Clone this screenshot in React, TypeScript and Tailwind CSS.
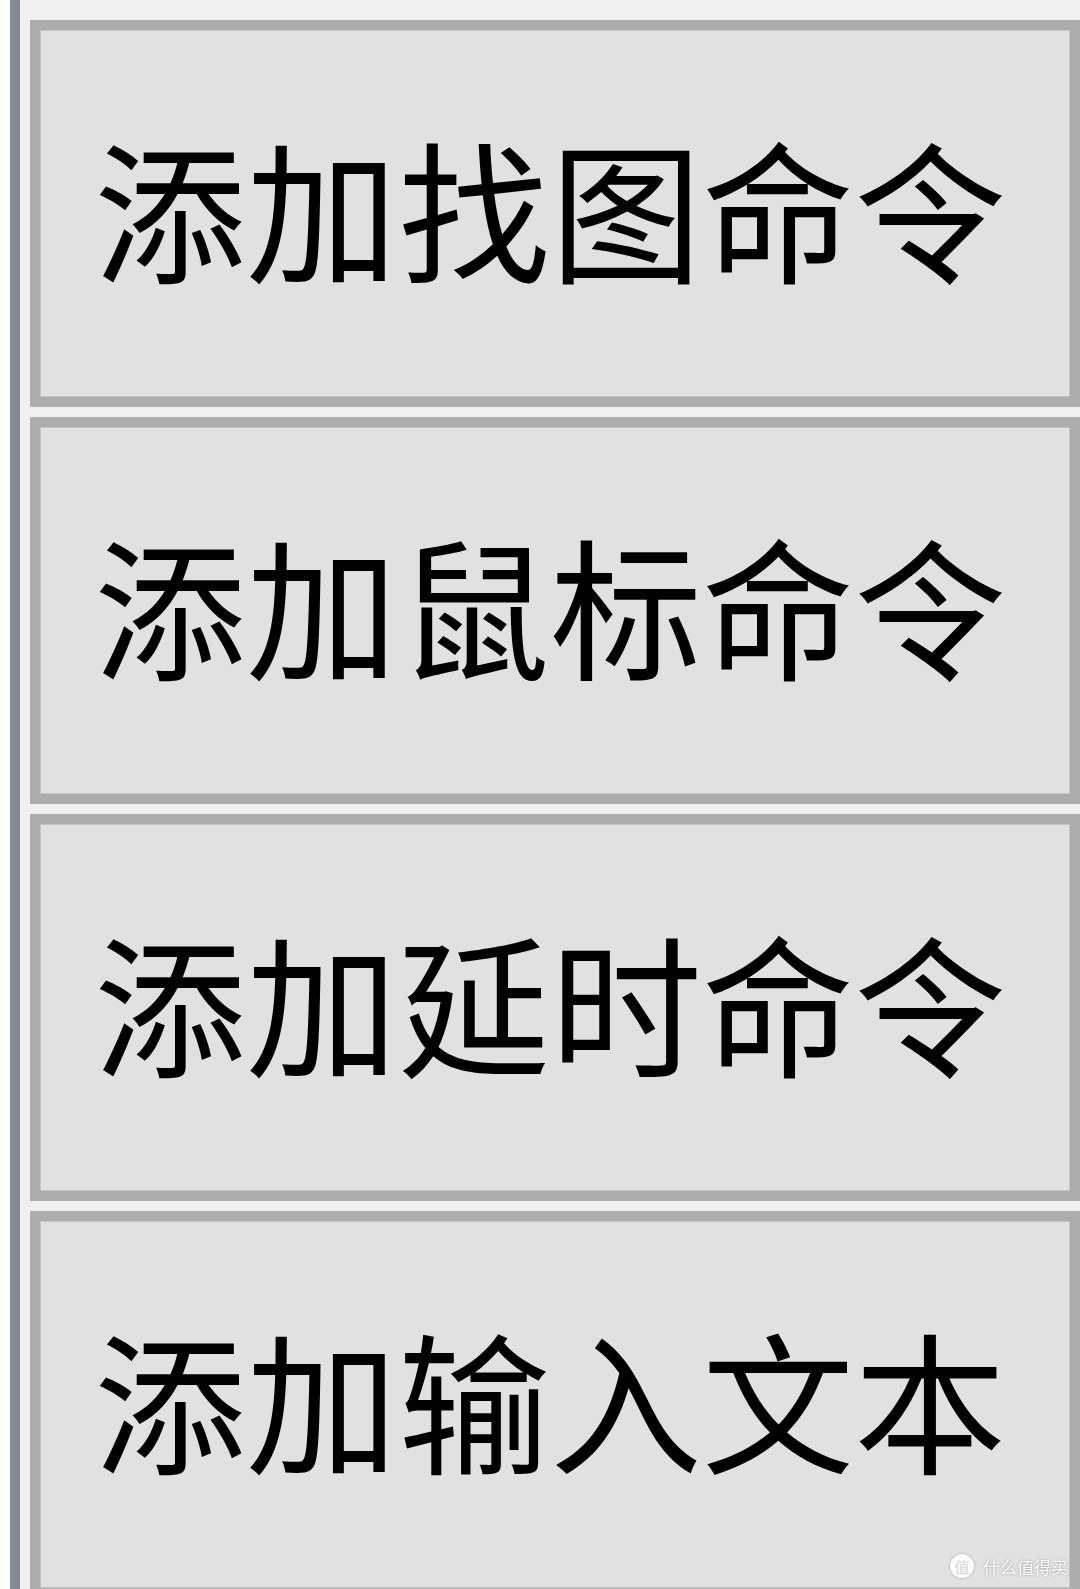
import React from "react";

const labels = ["添加找图命令", "添加鼠标命令", "添加延时命令", "添加输入文本"];

export default function App() {
  return (
    <div className="relative flex h-[1589px] w-[1080px] overflow-hidden bg-white">
      <div className="w-[10px] shrink-0 bg-white" />
      <div className="w-[10px] shrink-0 bg-[#848994]" />
      <div className="flex flex-1 flex-col gap-[10px] bg-[#f0f0f0] pl-[10px] pt-[20px]">
        {labels.map((t) => (
          <div
            key={t}
            className="flex h-[387px] shrink-0 items-center justify-center border-[10px] border-[#adadad] bg-[#e1e1e1] pb-[16px] shadow-[inset_0_0_0_1px_#c4c4c4]"
          >
            <span
              className="pr-[10px] text-[152px] leading-none text-black"
              style={{ fontFamily: '"Noto Sans CJK SC", "Noto Sans", sans-serif' }}
            >
              {t}
            </span>
          </div>
        ))}
      </div>
      <div className="absolute left-[950px] top-[1554px] flex items-center gap-[9px] text-white opacity-90 drop-shadow-[0_0_1px_rgba(0,0,0,0.35)]">
        <div
          className="flex h-[24px] w-[24px] items-center justify-center rounded-full bg-white text-[15px] font-bold leading-none text-[#e1e1e1]"
          style={{ fontFamily: '"Noto Sans CJK SC", sans-serif' }}
        >
          值
        </div>
        <span
          className="text-[17px] leading-none"
          style={{ fontFamily: '"Noto Sans CJK SC", sans-serif' }}
        >
          什么值得买
        </span>
      </div>
    </div>
  );
}
